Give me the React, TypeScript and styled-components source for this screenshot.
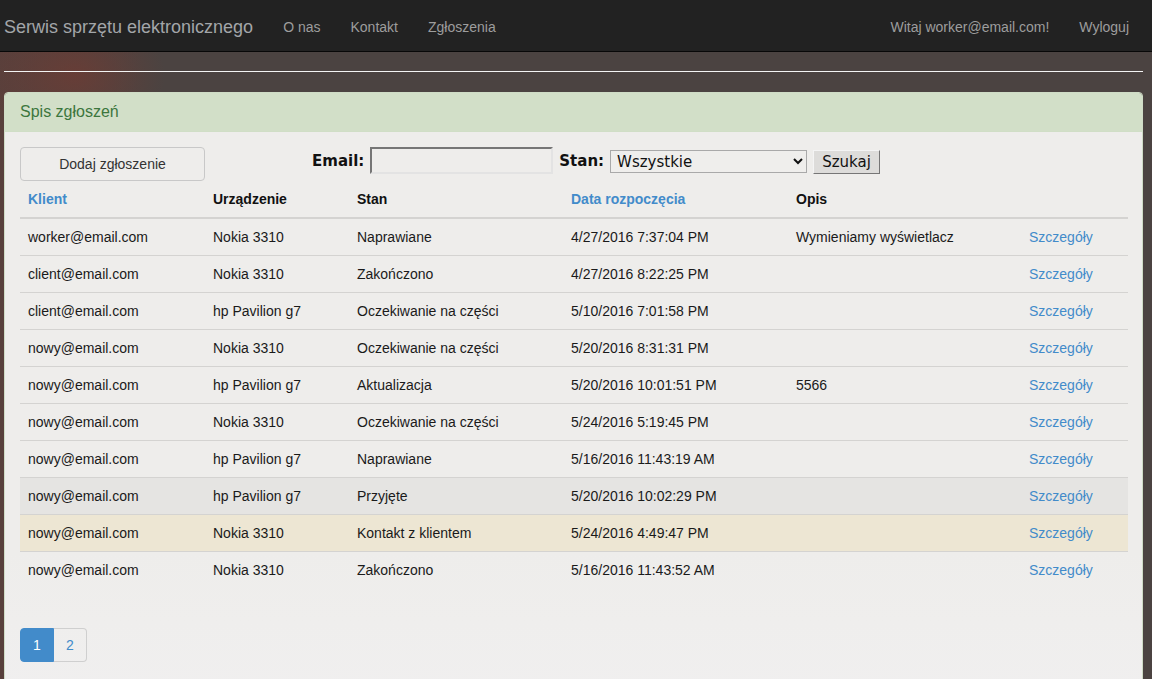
import { FC } from 'react';
import styled, { createGlobalStyle } from 'styled-components';

const GlobalStyle = createGlobalStyle`
  html, body {
    margin: 0;
    padding: 0;
  }
  body {
    font-family: "Liberation Sans", Arial, sans-serif;
    font-size: 14px;
    color: #222;
    background-color: #4b4341;
    background-image:
      radial-gradient(ellipse 90px 70px at 75px 75px, rgba(110, 60, 52, 0.75), rgba(110, 60, 52, 0) 100%),
      linear-gradient(90deg, #58403c 0px, #4b4341 140px);
    background-repeat: no-repeat;
    background-attachment: fixed;
    min-height: 679px;
    overflow: hidden;
  }
`;

type Ticket = {
  client: string;
  device: string;
  state: string;
  date: string;
  desc: string;
  tone?: 'active' | 'warning';
};

const tickets: Ticket[] = [
  { client: 'worker@email.com', device: 'Nokia 3310', state: 'Naprawiane', date: '4/27/2016 7:37:04 PM', desc: 'Wymieniamy wyświetlacz' },
  { client: 'client@email.com', device: 'Nokia 3310', state: 'Zakończono', date: '4/27/2016 8:22:25 PM', desc: '' },
  { client: 'client@email.com', device: 'hp Pavilion g7', state: 'Oczekiwanie na części', date: '5/10/2016 7:01:58 PM', desc: '' },
  { client: 'nowy@email.com', device: 'Nokia 3310', state: 'Oczekiwanie na części', date: '5/20/2016 8:31:31 PM', desc: '' },
  { client: 'nowy@email.com', device: 'hp Pavilion g7', state: 'Aktualizacja', date: '5/20/2016 10:01:51 PM', desc: '5566' },
  { client: 'nowy@email.com', device: 'Nokia 3310', state: 'Oczekiwanie na części', date: '5/24/2016 5:19:45 PM', desc: '' },
  { client: 'nowy@email.com', device: 'hp Pavilion g7', state: 'Naprawiane', date: '5/16/2016 11:43:19 AM', desc: '' },
  { client: 'nowy@email.com', device: 'hp Pavilion g7', state: 'Przyjęte', date: '5/20/2016 10:02:29 PM', desc: '', tone: 'active' },
  { client: 'nowy@email.com', device: 'Nokia 3310', state: 'Kontakt z klientem', date: '5/24/2016 4:49:47 PM', desc: '', tone: 'warning' },
  { client: 'nowy@email.com', device: 'Nokia 3310', state: 'Zakończono', date: '5/16/2016 11:43:52 AM', desc: '' },
];

const columns = [185, 144, 214, 225, 233, 107];

const App: FC = () => {
  return (
    <>
      <GlobalStyle />
      <Navbar>
        <NavLeft>
          <Brand href="#">Serwis sprzętu elektronicznego</Brand>
          <NavLink href="#">O nas</NavLink>
          <NavLink href="#">Kontakt</NavLink>
          <NavLink href="#">Zgłoszenia</NavLink>
        </NavLeft>
        <NavRight>
          <NavLink href="#">Witaj worker@email.com!</NavLink>
          <NavLink href="#">Wyloguj</NavLink>
        </NavRight>
      </Navbar>

      <Container>
        <Rule />
        <Panel>
          <PanelHeading>Spis zgłoszeń</PanelHeading>
          <PanelBody>
            <Toolbar>
              <AddButton>Dodaj zgłoszenie</AddButton>
              <SearchForm onSubmit={(e) => e.preventDefault()}>
                <Label htmlFor="email">Email:</Label>
                <EmailInput id="email" type="text" />
                <Label htmlFor="stan">Stan:</Label>
                <StateSelect id="stan" defaultValue="all">
                  <option value="all">Wszystkie</option>
                </StateSelect>
                <SearchButton type="submit">Szukaj</SearchButton>
              </SearchForm>
            </Toolbar>

            <Table>
              <colgroup>
                {columns.map((w, i) => (
                  <col key={i} style={{ width: w }} />
                ))}
              </colgroup>
              <thead>
                <tr>
                  <Th><HeadLink href="#">Klient</HeadLink></Th>
                  <Th>Urządzenie</Th>
                  <Th>Stan</Th>
                  <Th><HeadLink href="#">Data rozpoczęcia</HeadLink></Th>
                  <Th>Opis</Th>
                  <Th />
                </tr>
              </thead>
              <tbody>
                {tickets.map((t, i) => (
                  <Row key={i} $tone={t.tone}>
                    <Td>{t.client}</Td>
                    <Td>{t.device}</Td>
                    <Td>{t.state}</Td>
                    <Td>{t.date}</Td>
                    <Td>{t.desc}</Td>
                    <Td><Link href="#">Szczegóły</Link></Td>
                  </Row>
                ))}
              </tbody>
            </Table>

            <Pagination>
              <PageItem $active>1</PageItem>
              <PageItem>2</PageItem>
            </Pagination>
          </PanelBody>
        </Panel>
      </Container>
    </>
  );
};

const Navbar = styled.nav`
  display: flex;
  justify-content: space-between;
  align-items: center;
  box-sizing: border-box;
  height: 52px;
  padding: 2px 8px 0 4px;
  background: #222;
  border-bottom: 1px solid #080808;
`;

const NavLeft = styled.div`
  display: flex;
  align-items: center;
`;

const NavRight = styled.div`
  display: flex;
  align-items: center;
`;

const Brand = styled.a`
  font-size: 18px;
  color: #a3a6a9;
  text-decoration: none;
  padding-right: 15px;
  line-height: 20px;
`;

const NavLink = styled.a`
  font-size: 14px;
  color: #9d9d9d;
  text-decoration: none;
  padding: 0 15px;
  line-height: 20px;
`;

const Container = styled.div`
  margin-left: 4px;
  width: 1139px;
`;

const Rule = styled.hr`
  margin: 19px 0 20px;
  border: 0;
  border-top: 1px solid #f4f4f4;
  height: 0;
`;

const Panel = styled.section`
  border: 1px solid #cfdcc6;
  border-radius: 4px;
  overflow: hidden;
`;

const PanelHeading = styled.div`
  background: #d2dfc8;
  color: #3c763d;
  font-size: 16px;
  padding: 10px 15px;
  height: 18px;
  line-height: 18px;
  border-bottom: 1px solid #d0dec6;
`;

const PanelBody = styled.div`
  padding: 15px 15px 20px;
  background:
    radial-gradient(ellipse 400px 80px at 500px 640px, rgba(255, 255, 255, 0.35), rgba(255, 255, 255, 0)),
    linear-gradient(180deg, #eeedeb 0px, #eeedeb 420px, #f0efef 560px);
  height: 600px;
`;

const Toolbar = styled.div`
  display: flex;
  align-items: flex-start;
`;

const AddButton = styled.button`
  width: 185px;
  height: 34px;
  border: 1px solid #c8c8c8;
  border-radius: 4px;
  background: transparent;
  font-family: "Liberation Sans", Arial, sans-serif;
  font-size: 14px;
  color: #333;
`;

const SearchForm = styled.form`
  display: flex;
  align-items: center;
  margin-left: 107px;
  font-family: "DejaVu Sans", Verdana, sans-serif;
`;

const Label = styled.label`
  font-weight: bold;
  font-size: 15px;
  color: #111;
  margin-right: 6px;
  margin-top: 1px;
`;

const EmailInput = styled.input`
  box-sizing: border-box;
  width: 183px;
  height: 27px;
  margin-right: 6px;
  background: transparent;
  border: 2px solid;
  border-color: #767676 #e3e3e3 #e3e3e3 #767676;
  padding: 1px 2px;
  font-size: 15px;
`;

const StateSelect = styled.select`
  box-sizing: border-box;
  width: 197px;
  height: 23px;
  margin-top: 2px;
  margin-right: 6px;
  background: #efeeec;
  border: 1px solid #a9a9a9;
  font-family: "DejaVu Sans", Verdana, sans-serif;
  font-size: 15px;
  color: #111;
  padding: 0 2px;
`;

const SearchButton = styled.button`
  box-sizing: border-box;
  width: 67px;
  height: 24px;
  margin-top: 2px;
  background: #dddcda;
  border: 1px solid;
  border-color: #f4f4f4 #767676 #767676 #f4f4f4;
  font-family: "DejaVu Sans", Verdana, sans-serif;
  font-size: 15px;
  color: #111;
  padding: 0 4px;
`;

const Table = styled.table`
  width: 1108px;
  border-collapse: collapse;
  table-layout: fixed;
`;

const Th = styled.th`
  text-align: left;
  font-weight: bold;
  padding: 8px;
  line-height: 20px;
  border-bottom: 2px solid #d4d3d1;
  color: #111;
`;

const HeadLink = styled.a`
  color: #428bca;
  text-decoration: none;
`;

const Row = styled.tr<{ $tone?: 'active' | 'warning' }>`
  background: ${(p) =>
    p.$tone === 'active' ? '#e5e4e2' : p.$tone === 'warning' ? '#ede6d3' : 'transparent'};
`;

const Td = styled.td`
  padding: 8px;
  line-height: 20px;
  white-space: nowrap;
  color: #1a1a1a;
  border-top: 1px solid #d4d3d1;
`;

const Link = styled.a`
  color: #428bca;
  text-decoration: none;
`;

const Pagination = styled.div`
  display: flex;
  margin-top: 40px;
`;

const PageItem = styled.a<{ $active?: boolean }>`
  box-sizing: border-box;
  width: ${(p) => (p.$active ? '34px' : '33px')};
  height: 34px;
  line-height: 32px;
  text-align: center;
  font-size: 14px;
  color: ${(p) => (p.$active ? '#fff' : '#428bca')};
  background: ${(p) => (p.$active ? '#428bca' : 'transparent')};
  border: 1px solid ${(p) => (p.$active ? '#428bca' : '#cfcfcf')};
  border-radius: ${(p) => (p.$active ? '4px 0 0 4px' : '0 4px 4px 0')};
  ${(p) => (!p.$active ? 'border-left: 0;' : '')}
`;

export default App;
